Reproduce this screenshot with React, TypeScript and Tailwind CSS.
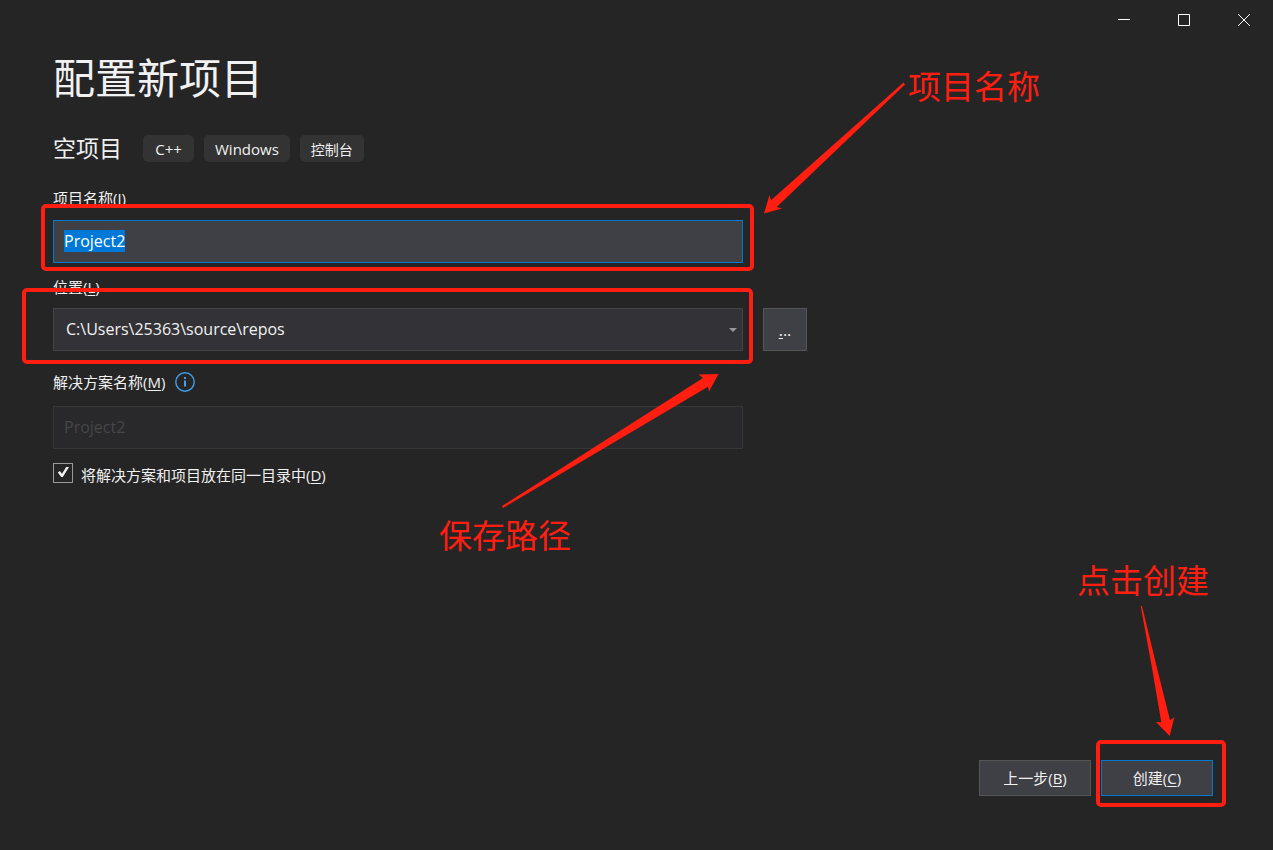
import { useEffect, useRef, useState } from "react";
import type { ReactNode } from "react";

const FRAME = "pointer-events-none absolute rounded-[5px] border-4 border-[#ff1e10]";
const NOTE = "whitespace-nowrap text-[33px] leading-10 text-[#ff1e10]";
const BUTTON = "h-9 w-28 border bg-[#3f3f46] text-[15px] hover:bg-[#55555c] focus:outline-none";

function Chip({ children }: { children: ReactNode }) {
  return (
    <li className="h-[27px] min-w-[51px] rounded-[5px] bg-[#333334] px-[11px] text-center leading-7">{children}</li>
  );
}

function WindowControls() {
  const button = "flex h-10 w-[60px] items-center justify-center hover:bg-[#3f3f46]";
  return (
    <div className="flex justify-end">
      <button aria-label="最小化" className={button}>
        <svg width="16" height="14" viewBox="0 0 16 14" stroke="#fff">
          <path d="M3 6.5h12" />
        </svg>
      </button>
      <button aria-label="最大化" className={button}>
        <svg width="16" height="14" viewBox="0 0 16 14" fill="none" stroke="#fff">
          <path d="M3.5 1.5h11v11h-11z" />
        </svg>
      </button>
      <button aria-label="关闭" className={button}>
        <svg width="16" height="14" viewBox="0 0 16 14" stroke="#fff">
          <path d="M3 1l12 12M15 1L3 13" />
        </svg>
      </button>
    </div>
  );
}

export default function App() {
  const [name, setName] = useState("Project2");
  const [sameDir, setSameDir] = useState(true);
  const nameRef = useRef<HTMLInputElement>(null);

  useEffect(() => {
    nameRef.current?.focus();
    nameRef.current?.select();
  }, []);

  return (
    <div className="flex min-h-screen flex-col bg-[#252526] font-['Open_Sans','Noto_Sans_CJK_SC',sans-serif] text-[#f1f1f1]">
      <WindowControls />

      <main className="flex-1 px-[53px] pt-[10px]">
        <h1 className="text-[42px] leading-[56px]">配置新项目</h1>

        <div className="mt-[29px] flex items-center">
          <h2 className="text-[23px] leading-[27px]">空项目</h2>
          <ul className="ml-[21px] flex gap-[10px] text-[15px]">
            <Chip>C++</Chip>
            <Chip>Windows</Chip>
            <Chip>
              <span className="text-sm">控制台</span>
            </Chip>
          </ul>
        </div>

        {/* Project name */}
        <label htmlFor="name" className="mt-[26px] block text-[15px] leading-5">
          项目名称(<u className="underline-offset-2">J</u>)
        </label>
        <div className="relative mt-3 max-w-[690px]">
          <input
            id="name"
            ref={nameRef}
            value={name}
            onChange={(e) => setName(e.target.value)}
            className="block h-[43px] w-full border border-[#434346] bg-[#3f3f46] px-[10px] pb-[2px] text-base selection:bg-[#0078d7] selection:text-white focus:border-[#007acc] focus:outline-none"
          />
          <div className={`${FRAME} -top-4 -right-[11px] -bottom-2 -left-3`} />
          <div className="pointer-events-none absolute -top-[153px] left-full ml-[17px] flex">
            <svg width="148" height="136" viewBox="0 0 148 136" fill="#ff1e10" className="mt-[13px]">
              <path d="M143.5 2.5L145 4.5L16.7 127L22 128.5L4 133.5L9.5 115L11 120.3Z" />
            </svg>
            <p className={NOTE}>项目名称</p>
          </div>
        </div>

        {/* Location */}
        <label htmlFor="location" className="mt-[14px] block text-[15px] leading-5">
          位置(<u className="underline-offset-2">L</u>)
        </label>
        <div className="mt-[11px] flex gap-5">
          <div className="relative w-full max-w-[690px]">
            <select
              id="location"
              className="block h-[43px] w-full appearance-none border border-[#434346] bg-[#333337] px-3 pb-[2px] text-base focus:outline-none"
            >
              <option>C:\Users\25363\source\repos</option>
            </select>
            <svg
              width="8"
              height="4"
              viewBox="0 0 8 4"
              fill="#999"
              className="pointer-events-none absolute top-5 right-[6px]"
            >
              <path d="M0 0h8L4 4z" />
            </svg>
            <div className={`${FRAME} -top-5 -right-[10px] -bottom-[13px] -left-[31px]`} />
            <div className="pointer-events-none absolute top-full right-[23px] mt-[19px] w-[281px]">
              <svg width="220" height="140" viewBox="0 0 220 140" fill="#ff1e10" className="ml-auto">
                <path d="M2 136L203 8L198.5 4.5L218.5 4L209 21.5L208 16.7L3 138Z" />
              </svg>
              <p className={`${NOTE} mt-[6px]`}>保存路径</p>
            </div>
          </div>
          <button
            aria-label="浏览"
            className="h-[43px] w-11 shrink-0 border border-[#555] bg-[#3f3f46] text-base hover:bg-[#55555c]"
          >
            <u className="underline-offset-2">.</u>..
          </button>
        </div>

        {/* Solution name, follows the project name while both share a folder */}
        <div className="mt-[21px] flex items-center gap-[10px]">
          <label htmlFor="solution" className="text-[15px] leading-5">
            解决方案名称(<u className="underline-offset-2">M</u>)
          </label>
          <svg width="20" height="20" viewBox="0 0 20 20" fill="none" stroke="#3f9fe8">
            <circle cx="10" cy="10" r="9.2" strokeWidth="1.4" />
            <path d="M10 8.5v6M10 5v2" strokeWidth="2" />
          </svg>
        </div>
        <input
          id="solution"
          value={name}
          disabled={sameDir}
          readOnly
          className="mt-[14px] block h-[43px] w-full max-w-[690px] border border-[#37373a] bg-[#29292b] px-[10px] pb-[2px] text-base text-[#464648]"
        />

        <div className="mt-[14px] flex gap-2">
          <span className="relative size-5">
            <input
              id="same-dir"
              type="checkbox"
              checked={sameDir}
              onChange={(e) => setSameDir(e.target.checked)}
              className="block size-5 appearance-none border border-[#999] bg-[#252526]"
            />
            {sameDir && (
              <svg
                width="20"
                height="20"
                viewBox="0 0 20 20"
                fill="#f1f1f1"
                className="pointer-events-none absolute inset-0"
              >
                <path d="M4.8 9.5L6.8 8L9 10.8L13.2 4H16L9.8 14H8.2Z" />
              </svg>
            )}
          </span>
          <label htmlFor="same-dir" className="text-[15px] leading-6">
            将解决方案和项目放在同一目录中(<u className="underline-offset-2">D</u>)
          </label>
        </div>
      </main>

      <footer className="flex justify-end gap-[10px] pr-[60px] pb-[54px]">
        <button className={`${BUTTON} border-[#555]`}>
          上一步(<u className="underline-offset-2">B</u>)
        </button>
        <div className="relative">
          <button className={`${BUTTON} border-[#007acc]`}>
            创建(<u className="underline-offset-2">C</u>)
          </button>
          <div className={`${FRAME} -top-5 -right-[13px] -bottom-[11px] -left-[5px]`} />
          <div className="pointer-events-none absolute right-1 bottom-full mb-5">
            <p className={NOTE}>点击创建</p>
            <svg width="40" height="136" viewBox="0 0 40 136" fill="#ff1e10" className="mt-[3px] ml-[63px]">
              <path d="M0.7 2H2L17 64L30 116.3L34.3 113.3L29.7 132L16 118L21.3 118.3L12 64Z" />
            </svg>
          </div>
        </div>
      </footer>
    </div>
  );
}
